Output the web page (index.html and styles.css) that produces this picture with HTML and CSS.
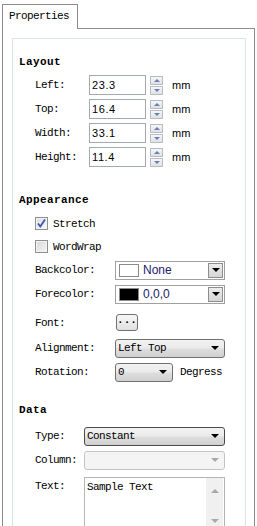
FILE: index.html
```html
<!DOCTYPE html>
<html>
<head>
  <title>Properties</title>
  <link rel="stylesheet" href="styles.css">
</head>

<body>
  <div class="tabs">
    <div class="tab">Properties</div>
  </div>

  <div class="panel">
    <div class="group">

      <p class="section-title">Layout</p>
      <div class="layout-rows">
        <div class="row">
          <span class="label label-layout">Left:</span>
          <span class="spin-input">23.3</span>
          <span class="spin-buttons"><span class="spin-btn"><i class="arrow-up"></i></span><span class="spin-btn"><i class="arrow-down"></i></span></span>
          <span class="unit">mm</span>
        </div>
        <div class="row">
          <span class="label label-layout">Top:</span>
          <span class="spin-input">16.4</span>
          <span class="spin-buttons"><span class="spin-btn"><i class="arrow-up"></i></span><span class="spin-btn"><i class="arrow-down"></i></span></span>
          <span class="unit">mm</span>
        </div>
        <div class="row">
          <span class="label label-layout">Width:</span>
          <span class="spin-input">33.1</span>
          <span class="spin-buttons"><span class="spin-btn"><i class="arrow-up"></i></span><span class="spin-btn"><i class="arrow-down"></i></span></span>
          <span class="unit">mm</span>
        </div>
        <div class="row">
          <span class="label label-layout">Height:</span>
          <span class="spin-input">11.4</span>
          <span class="spin-buttons"><span class="spin-btn"><i class="arrow-up"></i></span><span class="spin-btn"><i class="arrow-down"></i></span></span>
          <span class="unit">mm</span>
        </div>
      </div>

      <p class="section-title appearance-title">Appearance</p>
      <div class="appearance-rows">
        <div class="row check-row">
          <span class="checkbox checked">
            <svg width="11" height="11" viewBox="0 0 11 11"><path d="M2 5.5 L4.3 8.5 L9 1.5" fill="none" stroke="#3d56a6" stroke-width="1.8"/></svg>
          </span>
          <span>Stretch</span>
        </div>
        <div class="row check-row">
          <span class="checkbox"></span>
          <span>WordWrap</span>
        </div>
        <div class="row">
          <span class="label label-appearance">Backcolor:</span>
          <span class="color-combo">
            <span class="swatch"></span>
            <span class="color-text">None</span>
            <span class="drop-btn"><i class="arrow-down-black"></i></span>
          </span>
        </div>
        <div class="row">
          <span class="label label-appearance">Forecolor:</span>
          <span class="color-combo">
            <span class="swatch swatch-black"></span>
            <span class="color-text">0,0,0</span>
            <span class="drop-btn"><i class="arrow-down-black"></i></span>
          </span>
        </div>
        <div class="row font-row">
          <span class="label label-appearance">Font:</span>
          <span class="dots-button">...</span>
        </div>
        <div class="row">
          <span class="label label-appearance">Alignment:</span>
          <span class="combo combo-wide">Left Top<i class="arrow-down-black"></i></span>
        </div>
        <div class="row">
          <span class="label label-appearance">Rotation:</span>
          <span class="combo combo-small">0<i class="arrow-down-black"></i></span>
          <span class="degrees">Degress</span>
        </div>
      </div>

      <p class="section-title data-title">Data</p>
      <div class="data-rows">
        <div class="row">
          <span class="label label-data">Type:</span>
          <span class="combo combo-data combo-focus">Constant<i class="arrow-down-black"></i></span>
        </div>
        <div class="row">
          <span class="label label-data">Column:</span>
          <span class="combo combo-data combo-disabled"><i class="arrow-down-gray"></i></span>
        </div>
        <div class="row text-row">
          <span class="label label-data">Text:</span>
          <div class="text-area">
            <span class="text-value">Sample Text</span>
            <div class="scrollbar">
              <i class="arrow-up-gray"></i>
              <i class="arrow-down-gray"></i>
            </div>
          </div>
        </div>
      </div>

    </div>
  </div>
</body>
</html>
```

FILE: styles.css
```css
body {
  margin: 0;
  padding: 4px 0 0 2px;
  background-color: #ffffff;
  font-family: 'Liberation Mono', monospace;
  font-size: 11px;
  letter-spacing: -0.6px;
  color: #000000;
  overflow: hidden;
}

.tabs {
  display: flex;
}

.tab {
  position: relative;
  z-index: 1;
  box-sizing: border-box;
  width: 76px;
  height: 25px;
  margin-bottom: -1px;
  padding-left: 6px;
  border: 1px solid #8c8c8c;
  border-bottom: none;
  background-color: #ffffff;
  line-height: 22px;
}

/* the panel and group run on past the bottom of the window */
.panel {
  box-sizing: border-box;
  width: 253px;
  height: 498px;
  padding: 9px 8px 0 9px;
  border: 1px solid #8c8c8c;
  border-bottom: none;
}

.group {
  box-sizing: border-box;
  height: 488px;
  padding: 16px 6px 0 6px;
  border: 1px solid #dbe3e6;
  border-bottom: none;
  overflow: hidden;
}

.section-title {
  margin: 0;
  height: 14px;
  line-height: 14px;
  font-weight: bold;
  letter-spacing: 0.4px;
}

.appearance-title {
  margin-top: 24px;
}

.data-title {
  margin-top: 19px;
}

.layout-rows {
  margin-top: 4px;
}

.appearance-rows {
  margin-top: 5px;
}

.data-rows {
  margin-top: 7px;
}

.row {
  display: flex;
  align-items: center;
  height: 24px;
  padding-left: 16px;
}

.check-row {
  height: 23px;
}

.font-row {
  height: 30px;
  padding-top: 3px;
  box-sizing: border-box;
}

.label {
  flex-shrink: 0;
}

.label-layout {
  width: 54px;
}

.label-appearance {
  width: 80px;
}

.label-data {
  width: 49px;
}

/* spin boxes */
.spin-input {
  box-sizing: border-box;
  width: 57px;
  height: 20px;
  padding: 2px 0 0 2px;
  border: 1px solid #a3a9b3;
  font-family: 'Liberation Sans', sans-serif;
  font-size: 11px;
  letter-spacing: 0.6px;
  line-height: 14px;
}

.spin-buttons {
  display: flex;
  flex-direction: column;
  gap: 1px;
  margin-left: 4px;
}

.spin-btn {
  box-sizing: border-box;
  width: 13px;
  height: 9px;
  border: 1px solid #b9bcc2;
  background: linear-gradient(#f7f7f7, #dfe1e4);
  display: flex;
  justify-content: center;
  align-items: center;
}

.arrow-up {
  border-left: 3px solid transparent;
  border-right: 3px solid transparent;
  border-bottom: 3px solid #6a7fb6;
}

.arrow-down {
  border-left: 3px solid transparent;
  border-right: 3px solid transparent;
  border-top: 3px solid #6a7fb6;
}

.unit {
  margin-left: 9px;
  font-family: 'Liberation Sans', sans-serif;
  font-size: 11px;
  letter-spacing: 0;
}

/* checkboxes */
.checkbox {
  box-sizing: border-box;
  width: 13px;
  height: 13px;
  margin-right: 5px;
  border: 1px solid #8e8f8f;
  background: linear-gradient(135deg, #d8d8d8, #f6f6f6);
  box-shadow: inset 0 0 0 1px #f4f4f4;
  display: flex;
  justify-content: center;
  align-items: center;
}

.checked {
  background: linear-gradient(135deg, #dcdfe6, #f7f8fa);
}

/* colour pickers */
.color-combo {
  box-sizing: border-box;
  width: 110px;
  height: 19px;
  border: 1px solid #a0a0a0;
  display: flex;
  align-items: center;
  padding-left: 3px;
}

.swatch {
  box-sizing: border-box;
  width: 20px;
  height: 13px;
  border: 1px solid #8b8b8b;
  background-color: #ffffff;
}

.swatch-black {
  background-color: #000000;
}

.color-text {
  margin-left: 4px;
  flex: 1;
  font-family: 'Liberation Sans', sans-serif;
  font-size: 12px;
  letter-spacing: 0;
  color: #1b1b6a;
}

.drop-btn {
  box-sizing: border-box;
  width: 15px;
  height: 15px;
  margin-right: 1px;
  border: 1px solid #8d8d8d;
  background: linear-gradient(#ececec, #d6d6d6);
  display: flex;
  justify-content: center;
  align-items: center;
}

.arrow-down-black {
  border-left: 4px solid transparent;
  border-right: 4px solid transparent;
  border-top: 4px solid #000000;
}

.arrow-down-gray,
.arrow-up-gray {
  border-left: 4px solid transparent;
  border-right: 4px solid transparent;
}

.arrow-down-gray {
  border-top: 4px solid #a8a8a8;
}

.arrow-up-gray {
  border-bottom: 4px solid #a8a8a8;
}

.dots-button {
  box-sizing: border-box;
  width: 22px;
  height: 17px;
  margin-left: 1px;
  border: 1px solid #707070;
  border-radius: 3px;
  background: linear-gradient(#f8f8f8, #e0e0e0);
  font-weight: bold;
  text-align: center;
  line-height: 11px;
  letter-spacing: 0;
}

/* drop-down combos */
.combo {
  box-sizing: border-box;
  height: 19px;
  padding: 0 5px 0 2px;
  border: 1px solid #707070;
  border-radius: 3px;
  background: linear-gradient(#f3f3f3, #ebebeb 45%, #dddddd 55%, #d0d0d0);
  display: flex;
  align-items: center;
  justify-content: space-between;
  line-height: 17px;
}

.combo-wide {
  width: 110px;
}

.combo-small {
  width: 58px;
}

.combo-data {
  width: 141px;
}

.combo-focus {
  border-color: #4b4b4b;
}

.combo-disabled {
  justify-content: flex-end;
  border-color: #c4c4c4;
  background: #f4f4f4;
}

.degrees {
  margin-left: 7px;
}

/* multiline text */
.text-row {
  height: auto;
  align-items: flex-start;
  margin-top: 5px;
}

.text-row .label {
  padding-top: 3px;
}

.text-area {
  box-sizing: border-box;
  width: 141px;
  height: 49px;
  border: 1px solid #b5b5b5;
  border-bottom: none;
  display: flex;
  justify-content: space-between;
}

.text-value {
  padding: 3px 0 0 2px;
}

.scrollbar {
  width: 17px;
  margin-right: 1px;
  background-color: #f0f0f0;
  display: flex;
  flex-direction: column;
  align-items: center;
  padding-top: 11px;
  gap: 26px;
}
```
